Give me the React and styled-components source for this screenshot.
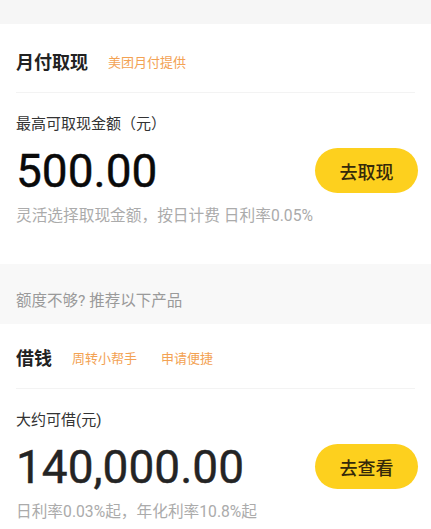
import React from "react";
import styled, { createGlobalStyle } from "styled-components";

const GlobalStyle = createGlobalStyle`
  * { box-sizing: border-box; }
  body {
    margin: 0;
    background: #ffffff;
    font-family: Roboto, "Noto Sans CJK SC", sans-serif;
    -webkit-font-smoothing: antialiased;
  }
`;

const products = [
  {
    title: "月付取现",
    tags: ["美团月付提供"],
    label: "最高可取现金额（元）",
    amount: "500.00",
    amountColor: "#0a0a0a",
    action: "去取现",
    note: "灵活选择取现金额，按日计费 日利率0.05%",
  },
  {
    title: "借钱",
    tags: ["周转小帮手", "申请便捷"],
    label: "大约可借(元)",
    amount: "140,000.00",
    amountColor: "#242424",
    action: "去查看",
    note: "日利率0.03%起，年化利率10.8%起",
  },
];

function ProductCard({ item, top, bottom }) {
  return (
    <Card $bottom={bottom}>
      <Header $top={top}>
        <Title>{item.title}</Title>
        <Tags>
          {item.tags.map((t) => (
            <Tag key={t}>{t}</Tag>
          ))}
        </Tags>
      </Header>
      <Body>
        <Label>{item.label}</Label>
        <AmountRow>
          <Amount $color={item.amountColor}>{item.amount}</Amount>
          <ActionButton>{item.action}</ActionButton>
        </AmountRow>
        <Note>{item.note}</Note>
      </Body>
    </Card>
  );
}

export default function App() {
  return (
    <>
      <GlobalStyle />
      <Page>
        <TopBand />
        <ProductCard item={products[0]} top={28} bottom={38} />
        <Recommend>额度不够? 推荐以下产品</Recommend>
        <ProductCard item={products[1]} top={24} bottom={8} />
      </Page>
    </>
  );
}

const Page = styled.div`
  width: 431px;
  height: 529px;
  background: #ffffff;
  overflow: hidden;
`;

const TopBand = styled.div`
  height: 24px;
  background: #f6f6f6;
`;

const Card = styled.section`
  background: #ffffff;
  padding: 0 16px ${(p) => p.$bottom}px;
`;

const Header = styled.div`
  display: flex;
  align-items: center;
  padding: ${(p) => p.$top}px 0 18px;
  border-bottom: 1px solid #f3f3f3;
`;

const Title = styled.h2`
  margin: 0;
  font-size: 18px;
  line-height: 22px;
  font-weight: 700;
  color: #222222;
`;

const Tags = styled.div`
  display: flex;
  gap: 24px;
  margin-left: 20px;
`;

const Tag = styled.span`
  font-size: 13px;
  line-height: 18px;
  color: #f3a253;
`;

const Body = styled.div`
  padding-top: 21px;
`;

const Label = styled.div`
  font-size: 15px;
  line-height: 20px;
  color: #333333;
`;

const AmountRow = styled.div`
  display: flex;
  align-items: center;
  justify-content: space-between;
  margin-top: 14px;
  height: 45px;
`;

const Amount = styled.div`
  font-family: Roboto, sans-serif;
  font-size: 46px;
  line-height: 46px;
  font-weight: 400;
  color: ${(p) => p.$color};
  -webkit-text-stroke: 0.4px ${(p) => p.$color};
`;

const ActionButton = styled.button`
  width: 103px;
  height: 45px;
  margin-right: -3px;
  border: none;
  border-radius: 23px;
  background: #fdd01e;
  color: #35290a;
  font-family: "Noto Sans CJK SC", sans-serif;
  font-size: 18px;
  font-weight: 500;
  cursor: pointer;
`;

const Note = styled.div`
  margin-top: 13px;
  font-size: 15.7px;
  line-height: 20px;
  color: #ababab;
`;

const Recommend = styled.div`
  background: #f8f8f8;
  padding: 27px 16px 13px;
  font-size: 15.5px;
  line-height: 20px;
  color: #9a9a9a;
`;
